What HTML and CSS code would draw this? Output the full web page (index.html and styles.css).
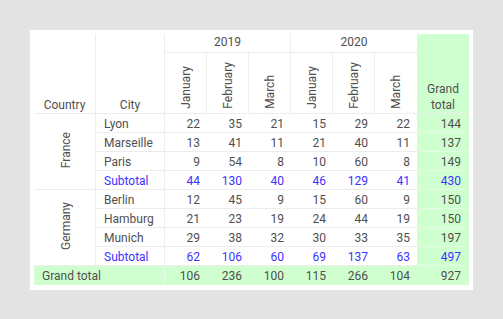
FILE: index.html
```html
<!DOCTYPE html>
<html>
<head>
<meta charset="utf-8">
<link rel="stylesheet" href="styles.css">
</head>
<body>
<div class="panel">
<table class="pivot">
  <colgroup>
    <col class="c-country"><col class="c-city">
    <col class="c-m"><col class="c-m"><col class="c-m">
    <col class="c-m"><col class="c-m"><col class="c-m">
    <col class="c-tot">
  </colgroup>
  <thead>
    <tr class="r-year">
      <th rowspan="2" class="h-dim br">Country</th>
      <th rowspan="2" class="h-dim br">City</th>
      <th colspan="3" class="h-year br">2019</th>
      <th colspan="3" class="h-year">2020</th>
      <th rowspan="2" class="h-tot">Grand<br>total</th>
    </tr>
    <tr class="r-month">
      <th class="h-month br"><span class="vt">January</span></th>
      <th class="h-month br"><span class="vt">February</span></th>
      <th class="h-month br"><span class="vt">March</span></th>
      <th class="h-month br"><span class="vt">January</span></th>
      <th class="h-month br"><span class="vt">February</span></th>
      <th class="h-month"><span class="vt">March</span></th>
    </tr>
  </thead>
  <tbody>
    <tr>
      <td rowspan="4" class="country br"><span class="vt">France</span></td>
      <td class="city br">Lyon</td>
      <td class="num">22</td><td class="num">35</td><td class="num">21</td>
      <td class="num">15</td><td class="num">29</td><td class="num">22</td>
      <td class="tot">144</td>
    </tr>
    <tr>
      <td class="city br">Marseille</td>
      <td class="num">13</td><td class="num">41</td><td class="num">11</td>
      <td class="num">21</td><td class="num">40</td><td class="num">11</td>
      <td class="tot">137</td>
    </tr>
    <tr>
      <td class="city br">Paris</td>
      <td class="num">9</td><td class="num">54</td><td class="num">8</td>
      <td class="num">10</td><td class="num">60</td><td class="num">8</td>
      <td class="tot">149</td>
    </tr>
    <tr class="sub">
      <td class="city br">Subtotal</td>
      <td class="num">44</td><td class="num">130</td><td class="num">40</td>
      <td class="num">46</td><td class="num">129</td><td class="num">41</td>
      <td class="tot">430</td>
    </tr>
    <tr>
      <td rowspan="4" class="country br"><span class="vt">Germany</span></td>
      <td class="city br">Berlin</td>
      <td class="num">12</td><td class="num">45</td><td class="num">9</td>
      <td class="num">15</td><td class="num">60</td><td class="num">9</td>
      <td class="tot">150</td>
    </tr>
    <tr>
      <td class="city br">Hamburg</td>
      <td class="num">21</td><td class="num">23</td><td class="num">19</td>
      <td class="num">24</td><td class="num">44</td><td class="num">19</td>
      <td class="tot">150</td>
    </tr>
    <tr>
      <td class="city br">Munich</td>
      <td class="num">29</td><td class="num">38</td><td class="num">32</td>
      <td class="num">30</td><td class="num">33</td><td class="num">35</td>
      <td class="tot">197</td>
    </tr>
    <tr class="sub">
      <td class="city br">Subtotal</td>
      <td class="num">62</td><td class="num">106</td><td class="num">60</td>
      <td class="num">69</td><td class="num">137</td><td class="num">63</td>
      <td class="tot">497</td>
    </tr>
  </tbody>
  <tfoot>
    <tr class="grand">
      <td colspan="2" class="g-label">Grand total</td>
      <td class="num">106</td><td class="num">236</td><td class="num">100</td>
      <td class="num">115</td><td class="num">266</td><td class="num">104</td>
      <td class="tot">927</td>
    </tr>
  </tfoot>
</table>
</div>
</body>
</html>
```
FILE: styles.css
```css
html, body {
  margin: 0;
  padding: 0;
  background: #e3e3e3;
}
body {
  padding: 30px;
  font-family: Roboto, "Liberation Sans", sans-serif;
}
.panel {
  display: inline-block;
  background: #ffffff;
  padding: 4px 4px 5px 4px;
}
.pivot {
  border-collapse: separate;
  border-spacing: 0;
  table-layout: fixed;
  width: 435px;
  font-size: 12px;
  color: #4f4f4f;
}
.c-country { width: 62px; }
.c-city { width: 69px; }
.c-m { width: 42px; }
.c-tot { width: 52px; }

.pivot th,
.pivot td {
  box-sizing: border-box;
  padding: 0;
  font-weight: normal;
  border-bottom: 1px solid #ededed;
  line-height: 16px;
  white-space: nowrap;
}
.pivot .br { border-right: 1px solid #ededed; }

.r-year { height: 19px; }
.r-month { height: 61px; }

.h-dim {
  vertical-align: bottom;
  text-align: center;
  padding-bottom: 1px;
}
.h-year {
  text-align: center;
  vertical-align: top;
  padding-top: 1px;
}
.h-tot {
  background: #cfffcf;
  vertical-align: bottom;
  text-align: center;
  line-height: 15px;
  border-bottom-color: #e6fbe6;
  padding-bottom: 1px;
}
.h-month {
  vertical-align: bottom;
  text-align: center;
  padding-bottom: 3px;
  padding-left: 3px;
}
.vt {
  display: inline-block;
  writing-mode: vertical-rl;
  transform: rotate(180deg);
}

.pivot tbody tr,
.pivot tfoot tr { height: 19px; }
.pivot tbody td {
  padding-top: 1px;
  line-height: 16px;
}
.city {
  text-align: left;
  padding-left: 8px !important;
}
.country {
  text-align: center;
  vertical-align: middle;
  padding-left: 3px !important;
}
.num {
  text-align: right;
  padding-right: 7px !important;
}
.tot {
  text-align: right;
  padding-right: 8px !important;
  background: #cfffcf;
  border-bottom-color: #e6fbe6 !important;
}
.sub td { color: #3d32ff; }

.grand td {
  background: #cfffcf;
  border-bottom: none;
  height: 18px;
  padding-top: 1px;
}
.grand .g-label {
  text-align: left;
  padding-left: 8px;
  border-right: 1px solid #ecfcec;
}
```
